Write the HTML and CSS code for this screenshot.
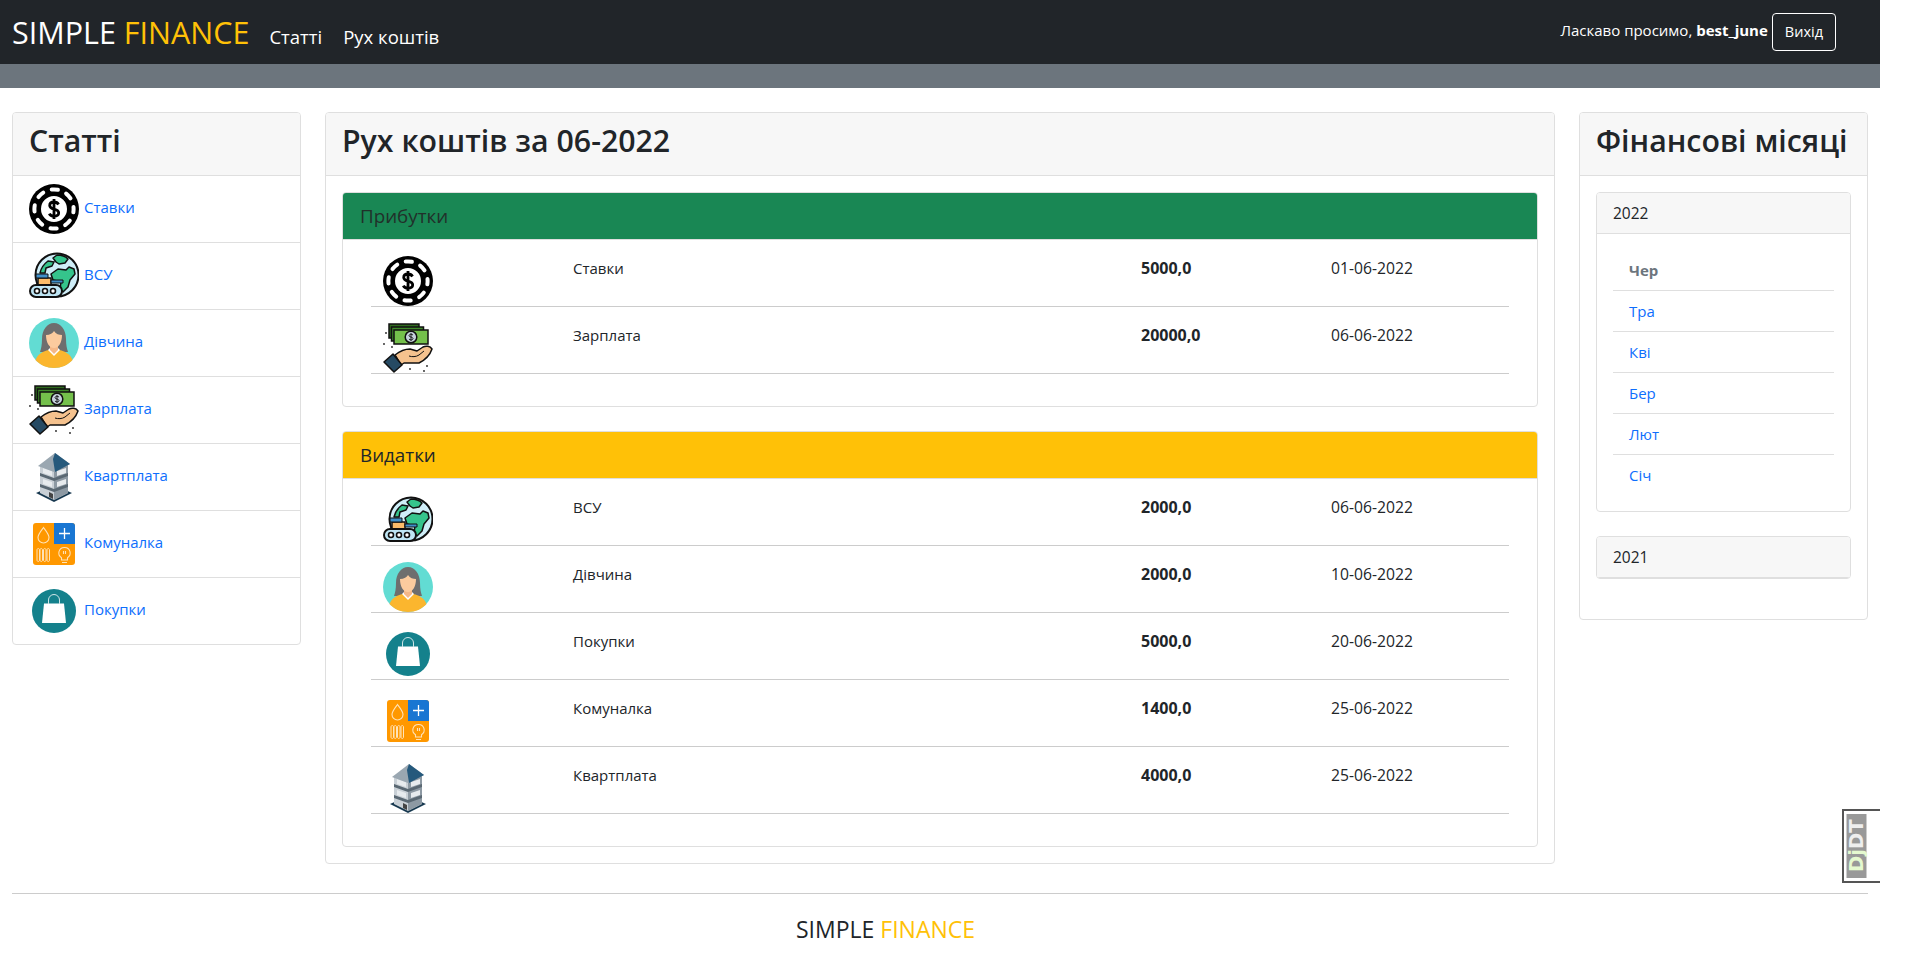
FILE: index.html
```html
<!DOCTYPE html>
<html lang="uk">
<head>
    <meta charset="UTF-8">
    <meta name="viewport" content="width=device-width, initial-scale=1.0">
    <title>Simple Finance</title>
    <link rel="stylesheet" href="styles.css">
</head>
<body>
    <svg class="sprite" aria-hidden="true">
        <symbol id="chip" viewBox="0 0 50 50">
            <circle cx="25" cy="25" r="25" fill="#000"/>
            <circle cx="25" cy="25" r="19.6" fill="none" stroke="#fff" stroke-width="4" stroke-linecap="round" stroke-dasharray="6.4 9" stroke-dashoffset="3"/>
            <circle cx="25" cy="25" r="14.6" fill="#fff" stroke="#000" stroke-width="3.2"/>
            <path d="M29.500 20.500c-.8-1.600-2.400-2.500-4.500-2.500-2.600 0-4.300 1.400-4.300 3.400 0 4.800 9 2.600 9 7.400 0 2-1.900 3.400-4.700 3.400-2.200 0-3.900-.9-4.700-2.600M25 15v20" fill="none" stroke="#000" stroke-width="2.800"/>
        </symbol>
        <symbol id="globe" viewBox="0 0 50 50">
            <circle cx="28" cy="24" r="21.500" fill="#cfeef8" stroke="#111" stroke-width="2"/>
            <path d="M11 22c1-5 4-9 8-12l6 1-2 4-6 2-1 5z M28 4c4 0 8 1 11 4l-3 4-6 1-3-2-3-4z M22 23l7-5 8 1 3-3 5 2 1 5-5 6-2 7-5 5-3-3 1-7-8-2z" fill="#35c48c" stroke="#111" stroke-width="1.500" stroke-linejoin="round"/>
            <path d="M9 27h13v7H9z" fill="#fcbc6a" stroke="#111" stroke-width="1.500"/>
            <path d="M7 23h12v4H7zM22 29h12v3H22z" fill="#3f8fc9" stroke="#111" stroke-width="1"/>
            <rect x="1" y="34" width="32" height="12" rx="6" fill="#bfe6f5" stroke="#111" stroke-width="2"/>
            <circle cx="8" cy="40" r="2.500" fill="#fff" stroke="#111" stroke-width="1.600"/>
            <circle cx="16" cy="40" r="2.500" fill="#fff" stroke="#111" stroke-width="1.600"/>
            <circle cx="24" cy="40" r="2.500" fill="#fff" stroke="#111" stroke-width="1.600"/>
        </symbol>
        <symbol id="woman" viewBox="0 0 50 50">
            <circle cx="25" cy="25" r="25" fill="#62dcd3"/>
            <path d="M13 21c0-9 5-16 12-16s12 7 12 16c0 6 1 10 2 13H11c1-3 2-7 2-13z" fill="#6e6e6e"/>
            <path d="M6.500 42c2-6 8-9 13-10h11c5 1 11 4 13 10-4.500 5-11 8-18.500 8S11 47 6.500 42z" fill="#fbb62e"/>
            <path d="M19 32l6 6 6-6-2-2h-8z" fill="#fff"/>
            <path d="M21 25h8v7l-4 4-4-4z" fill="#f5b888"/>
            <path d="M17 17c4 0 7-2 8-4 2 3 5 4 8 4 0 7-3 13-8 13s-8-6-8-13z" fill="#fccb9e"/>
        </symbol>
        <symbol id="money" viewBox="0 0 50 50">
            <path d="M6 1h30v14H6z" fill="#2f6b1e" stroke="#111" stroke-width="1.500"/>
            <path d="M8.500 4h32v14h-32z" fill="#3f8a2a" stroke="#111" stroke-width="1.500"/>
            <path d="M11 7h34v14H11z" fill="#74c04b" stroke="#111" stroke-width="1.500"/>
            <circle cx="28" cy="14" r="5.800" fill="#c5d0dc" stroke="#111" stroke-width="1.500"/>
            <path d="M30 12c-1-1-4-1-4 .7s4 1 4 2.800-3 1.700-4 .6M28 10v8" fill="none" stroke="#111" stroke-width=".9"/>
            <path d="M12 32c5-4 10-6 15-6l7 2 6-4c3-1.500 7-1 9 2-2 6-7 11-13 14H21l-3 2z" fill="#f5c28e" stroke="#111" stroke-width="1.500" stroke-linejoin="round"/>
            <path d="M26 33c3 1 7 1 10-1l5-4" fill="none" stroke="#111" stroke-width="1"/>
            <path d="M1 39l9-8 9 11-8 7z" fill="#264a63" stroke="#111" stroke-width="1.500" stroke-linejoin="round"/>
            <g fill="#222">
                <circle cx="3" cy="10" r=".9"/><circle cx="1" cy="21" r=".9"/><circle cx="9" cy="24" r=".9"/><circle cx="27" cy="46" r=".9"/><circle cx="41" cy="48" r=".9"/><circle cx="44" cy="43" r=".9"/>
            </g>
        </symbol>
        <symbol id="building" viewBox="0 0 50 50">
            <path d="M7 41l18-8 18 8-18 9z" fill="#17384f"/>
            <path d="M11 13h28v28l-14 7-14-7z" fill="#c9d0d6"/>
            <path d="M25 18l14-5v28l-14 7z" fill="#8d99a3"/>
            <path d="M11 21l14 5 14-5v3l-14 5-14-5zM11 32l14 5 14-5v3l-14 5-14-5z" fill="#5a6873"/>
            <path d="M14 16l9 3v5l-9-3zM14 27l9 3v5l-9-3zM28 19l9-3v5l-9 3zM28 30l9-3v5l-9 3z" fill="#e7ebee"/>
            <path d="M20 40l4 2v5l-4-2z" fill="#444"/>
            <path d="M9 14L26 1l15 11-16 8z" fill="#9aa7b1"/>
            <path d="M26 1l15 11-15 8-2-13z" fill="#25597c"/>
        </symbol>
        <symbol id="utils" viewBox="0 0 50 50">
            <rect x="4" y="4" width="42" height="42" rx="3" fill="#ff9800"/>
            <path d="M25 4h18a3 3 0 0 1 3 3v18H25z" fill="#1976d2"/>
            <path d="M35.500 9v11M30 14.500h11" stroke="#fff" stroke-width="1.300" fill="none"/>
            <path d="M14.500 8.500c3 4 5.500 7 5.500 10a5.500 5.500 0 0 1-11 0c0-3 2.500-6 5.500-10z" fill="none" stroke="#ffe3b8" stroke-width="1.100"/>
            <path d="M11 31c0-2 2.500-2 2.500 0v10c0 2-2.500 2-2.500 0zM14.500 31c0-2 2.500-2 2.500 0v10c0 2-2.500 2-2.500 0zM18 31c0-2 2.500-2 2.500 0v10c0 2-2.500 2-2.500 0zM8 31c0-2 2.500-2 2.500 0v10c0 2-2.500 2-2.500 0z" fill="none" stroke="#ffe3b8" stroke-width="1"/>
            <path d="M35.500 28.500a5.500 5.500 0 0 1 3 10.200V41h-6v-2.300a5.500 5.500 0 0 1 3-10.200zM33 43.500h5M34.500 32v3M36.500 32v3" fill="none" stroke="#ffe3b8" stroke-width="1.100"/>
        </symbol>
        <symbol id="bag" viewBox="0 0 50 50">
            <circle cx="25" cy="25" r="22" fill="#14818c"/>
            <path d="M15 17.500h20l2 19.500H13z" fill="#fff"/>
            <path d="M19.500 18v-4a5.500 5.500 0 0 1 11 0v4" fill="none" stroke="#cfe6e8" stroke-width="1"/>
        </symbol>
    </svg>

    <div class="page">
        <nav class="navbar">
            <div class="nav-left">
                <a class="brand" href="#">SIMPLE <span class="accent">FINANCE</span></a>
                <a class="nav-link" href="#">Статті</a>
                <a class="nav-link" href="#">Рух коштів</a>
            </div>
            <div class="nav-right">
                <span class="welcome">Ласкаво просимо, <b>best_june</b></span>
                <a class="btn-out" href="#">Вихід</a>
            </div>
        </nav>
        <div class="subbar"></div>

        <main class="columns">
            <section class="card">
                <div class="card-head"><h2>Статті</h2></div>
                <ul class="cat-list">
                    <li><svg class="icon"><use href="#chip"/></svg><a href="#">Ставки</a></li>
                    <li><svg class="icon"><use href="#globe"/></svg><a href="#">ВСУ</a></li>
                    <li><svg class="icon"><use href="#woman"/></svg><a href="#">Дівчина</a></li>
                    <li><svg class="icon"><use href="#money"/></svg><a href="#">Зарплата</a></li>
                    <li><svg class="icon"><use href="#building"/></svg><a href="#">Квартплата</a></li>
                    <li><svg class="icon"><use href="#utils"/></svg><a href="#">Комуналка</a></li>
                    <li><svg class="icon"><use href="#bag"/></svg><a href="#">Покупки</a></li>
                </ul>
            </section>

            <section class="card">
                <div class="card-head"><h2>Рух коштів за 06-2022</h2></div>
                <div class="card-body">
                    <div class="card mb">
                        <div class="sub-head income">Прибутки</div>
                        <div class="rows">
                            <div class="row"><svg class="icon"><use href="#chip"/></svg><span>Ставки</span><b>5000,0</b><span class="date">01-06-2022</span></div>
                            <div class="row"><svg class="icon"><use href="#money"/></svg><span>Зарплата</span><b>20000,0</b><span class="date">06-06-2022</span></div>
                        </div>
                    </div>
                    <div class="card">
                        <div class="sub-head expense">Видатки</div>
                        <div class="rows">
                            <div class="row"><svg class="icon"><use href="#globe"/></svg><span>ВСУ</span><b>2000,0</b><span class="date">06-06-2022</span></div>
                            <div class="row"><svg class="icon"><use href="#woman"/></svg><span>Дівчина</span><b>2000,0</b><span class="date">10-06-2022</span></div>
                            <div class="row"><svg class="icon"><use href="#bag"/></svg><span>Покупки</span><b>5000,0</b><span class="date">20-06-2022</span></div>
                            <div class="row"><svg class="icon"><use href="#utils"/></svg><span>Комуналка</span><b>1400,0</b><span class="date">25-06-2022</span></div>
                            <div class="row"><svg class="icon"><use href="#building"/></svg><span>Квартплата</span><b>4000,0</b><span class="date">25-06-2022</span></div>
                        </div>
                    </div>
                </div>
            </section>

            <section class="card">
                <div class="card-head"><h2>Фінансові місяці</h2></div>
                <div class="card-body">
                    <div class="card mb">
                        <div class="year-head">2022</div>
                        <ul class="month-list">
                            <li class="current">Чер</li>
                            <li><a href="#">Тра</a></li>
                            <li><a href="#">Кві</a></li>
                            <li><a href="#">Бер</a></li>
                            <li><a href="#">Лют</a></li>
                            <li><a href="#">Січ</a></li>
                        </ul>
                    </div>
                    <div class="card mb">
                        <div class="year-head">2021</div>
                    </div>
                </div>
            </section>
        </main>

        <hr class="rule">
        <footer class="footer">SIMPLE <span class="accent">FINANCE</span></footer>
    </div>

    <div class="djdt"><span class="djdt-text"><i>Dj</i>DT</span></div>
</body>
</html>
```

FILE: styles.css
```css
* {
    box-sizing: border-box;
}
body {
    margin: 0;
    font-family: "Open Sans", "Noto Sans", sans-serif;
    font-size: 15px;
    line-height: 24px;
    color: #212529;
    background: #fff;
    overflow-x: hidden;
}
a {
    color: #0d6efd;
    text-decoration: none;
}
.sprite {
    display: none;
}
.icon {
    display: block;
    width: 50px;
    height: 50px;
    flex: none;
}
.page {
    width: 1880px;
}
.accent {
    color: #ffc107;
}

/* navbar */
.navbar {
    display: flex;
    justify-content: space-between;
    height: 64px;
    background: #212529;
}
.nav-left {
    display: flex;
    align-items: baseline;
    padding: 8px 0 0 12px;
}
.brand {
    color: #fff;
    font-size: 30.500px;
    line-height: 48px;
    margin-right: 20px;
}
.nav-link {
    color: #fff;
    font-size: 18.500px;
    margin-right: 21px;
}
.nav-right {
    display: flex;
    align-items: flex-start;
    padding: 13px 44px 0 0;
}
.welcome {
    color: #fff;
    line-height: 34px;
    margin-right: 4px;
}
.btn-out {
    color: #fff;
    font-size: 14.500px;
    line-height: 36px;
    height: 38px;
    padding: 0 12px;
    border: 1px solid #fff;
    border-radius: 4px;
}
.subbar {
    height: 24px;
    background: #6c757d;
}

/* columns and cards */
.columns {
    display: grid;
    grid-template-columns: 289px 1fr 289px;
    gap: 24px;
    align-items: start;
    padding: 24px 12px 0;
}
.card {
    border: 1px solid #dfdfdf;
    border-radius: 4px;
    background: #fff;
    overflow: hidden;
}
.mb {
    margin-bottom: 24px;
}
.card-head {
    padding: 8px 16px;
    background: #f7f7f7;
    border-bottom: 1px solid #dfdfdf;
}
.card-head h2 {
    margin: 1px 0 7px;
    font-size: 30.300px;
    font-weight: 600;
    line-height: 38px;
    white-space: nowrap;
}
.card-body {
    padding: 16px;
}

/* left list */
.cat-list {
    list-style: none;
    margin: 0;
    padding: 0;
}
.cat-list li {
    display: flex;
    align-items: center;
    gap: 5px;
    padding: 8px 16px;
    border-bottom: 1px solid #dfdfdf;
}
.cat-list li:last-child {
    border-bottom: none;
}
.cat-list a {
    margin-top: -5px;
}

/* income and expense */
.sub-head {
    padding: 8px 17px;
    font-size: 18.800px;
    line-height: 30px;
    border-bottom: 1px solid #dfdfdf;
}
.income {
    background: #198754;
    color: #21302a;
}
.expense {
    background: #ffc107;
}
.rows {
    padding: 0 28px 32px;
}
.row {
    display: grid;
    grid-template-columns: 190px 568px 190px 1fr;
    align-items: start;
    height: 67px;
    padding: 16px 0 0 12px;
    border-bottom: 1px solid #ccc;
}
.row b {
    font-size: 16px;
    font-weight: 700;
}
.date {
    font-size: 15.700px;
}

/* months */
.year-head {
    padding: 8px 16px;
    font-size: 15.500px;
    background: #f7f7f7;
    border-bottom: 1px solid #dfdfdf;
}
.month-list {
    list-style: none;
    margin: 0;
    padding: 16px;
}
.month-list li {
    padding: 8px 16px;
    border-bottom: 1px solid #dfdfdf;
}
.month-list li:last-child {
    border-bottom: none;
}
.current {
    color: #6c757d;
    font-weight: 700;
}

/* footer */
.rule {
    margin: 29px 12px 0;
    border: none;
    border-top: 1px solid #ccc;
}
.footer {
    padding: 17px 0 0 796px;
    font-size: 23px;
    line-height: 36px;
}

/* debug toolbar handle */
.djdt {
    position: fixed;
    left: 1842px;
    top: 809px;
    width: 38px;
    height: 74px;
    padding: 3px 0 3px 3px;
    background: #fff;
    border: 2px solid #555;
    border-right: none;
}
.djdt-text {
    display: flex;
    align-items: center;
    justify-content: center;
    height: 100%;
    background: #999;
    color: #eee;
    font-family: "DejaVu Sans", sans-serif;
    font-size: 19.500px;
    font-weight: 700;
    line-height: 1;
    writing-mode: vertical-rl;
    transform: rotate(180deg);
}
.djdt-text i {
    font-style: normal;
    color: #e5f9cf;
}
```
